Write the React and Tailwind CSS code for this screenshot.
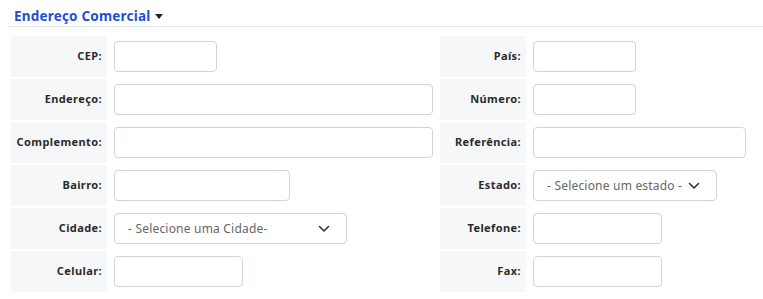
import React from 'react';

const font = { fontFamily: '"Noto Sans", "Liberation Sans", sans-serif' };

// Chevron used in the select boxes
const Chevron = () => (
  <svg width="12" height="8" viewBox="0 0 12 8" fill="none" className="shrink-0">
    <path d="M1.5 1.5L6 6L10.5 1.5" stroke="#333" strokeWidth="1.6" strokeLinecap="round" strokeLinejoin="round" />
  </svg>
);

const Label = ({ children }) => (
  <div className="bg-[#f6f7f9] flex items-center justify-end pr-[5px] text-[11px] font-bold tracking-[0.4px] text-[#2b2b2b]">
    {children}
  </div>
);

const Field = ({ w }) => (
  <div className="flex items-center pl-[5px]">
    <input className="h-[31px] border border-[#cfd3da] rounded-[4px] bg-white outline-none" style={{ width: w }} />
  </div>
);

const Select = ({ w, text, textPad }) => (
  <div className="flex items-center pl-[5px]">
    <div
      className="h-[31px] border border-[#cfd3da] rounded-[4px] bg-white flex items-center justify-between pr-[16px] text-[12px] tracking-[0.2px] text-[#666]"
      style={{ width: w, paddingLeft: textPad }}
    >
      <span>{text}</span>
      <Chevron />
    </div>
  </div>
);

export default function App() {
  return (
    <div className="w-[763px] h-[299px] bg-white overflow-hidden" style={font}>
      <div className="pl-[14px] pt-[6px] h-[26px] flex items-center gap-[5px] text-[13.5px] font-bold tracking-[0.2px] text-[#1f4fd4]">
        <span>Endereço Comercial</span>
        <svg width="8" height="5" viewBox="0 0 8 5"><path d="M0 0H8L4 5Z" fill="#222" /></svg>
      </div>
      <div className="ml-[9px] h-px bg-[#e2e4e8]" />
      <div className="pl-[11px] pt-[9px] grid grid-cols-[96px_329px_86px_1fr] auto-rows-[41px] gap-[2px]">
        <Label>CEP:</Label>
        <Field w={103} />
        <Label>País:</Label>
        <Field w={103} />

        <Label>Endereço:</Label>
        <Field w={319} />
        <Label>Número:</Label>
        <Field w={103} />

        <Label>Complemento:</Label>
        <Field w={319} />
        <Label>Referência:</Label>
        <Field w={213} />

        <Label>Bairro:</Label>
        <Field w={176} />
        <Label>Estado:</Label>
        <Select w={184} text="- Selecione um estado -" textPad={13} />

        <Label>Cidade:</Label>
        <Select w={233} text="- Selecione uma Cidade-" textPad={13} />
        <Label>Telefone:</Label>
        <Field w={129} />

        <Label>Celular:</Label>
        <Field w={129} />
        <Label>Fax:</Label>
        <Field w={129} />
      </div>
    </div>
  );
}
